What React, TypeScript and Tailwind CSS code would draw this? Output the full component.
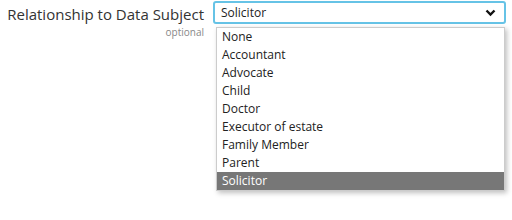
import React from "react";

const items = ["None","Accountant","Advocate","Child","Doctor","Executor of estate","Family Member","Parent","Solicitor"];

export default function App() {
  return (
    <div className="w-[512px] h-[220px] bg-white relative" style={{ fontFamily: '"Open Sans", sans-serif' }}>
      <div className="flex pt-[1px]">
        <div className="w-[205px] flex flex-col items-end pr-[1px]">
          <div className="text-[15px] leading-[20px] text-[#333] mt-[3px]">Relationship to Data Subject</div>
          <div className="text-[10px] leading-[14px] text-[#888] mt-[1px]">optional</div>
        </div>
        <div className="ml-[8px] w-[293px] h-[23px] border-2 border-[#66c3e6] rounded-[3px] flex items-center justify-between pl-[6px] pr-[8px]">
          <span className="text-[12px] text-[#222]">Solicitor</span>
          <svg width="11" height="8" viewBox="0 0 11 8"><path d="M1.5 1.5 L5.5 5.5 L9.5 1.5" stroke="#111" strokeWidth="2.4" fill="none" /></svg>
        </div>
      </div>
      <div className="absolute left-[216px] top-[27px] w-[289px] bg-white border border-[#ccc] shadow-[2px_2px_5px_rgba(0,0,0,0.25)] flex flex-col">
        {items.map((it) => (
          <div key={it} className={`h-[18px] leading-[18px] pl-[5px] text-[12px] ${it === "Solicitor" ? "bg-[#777] text-white" : "text-[#222]"}`}>{it}</div>
        ))}
      </div>
    </div>
  );
}
